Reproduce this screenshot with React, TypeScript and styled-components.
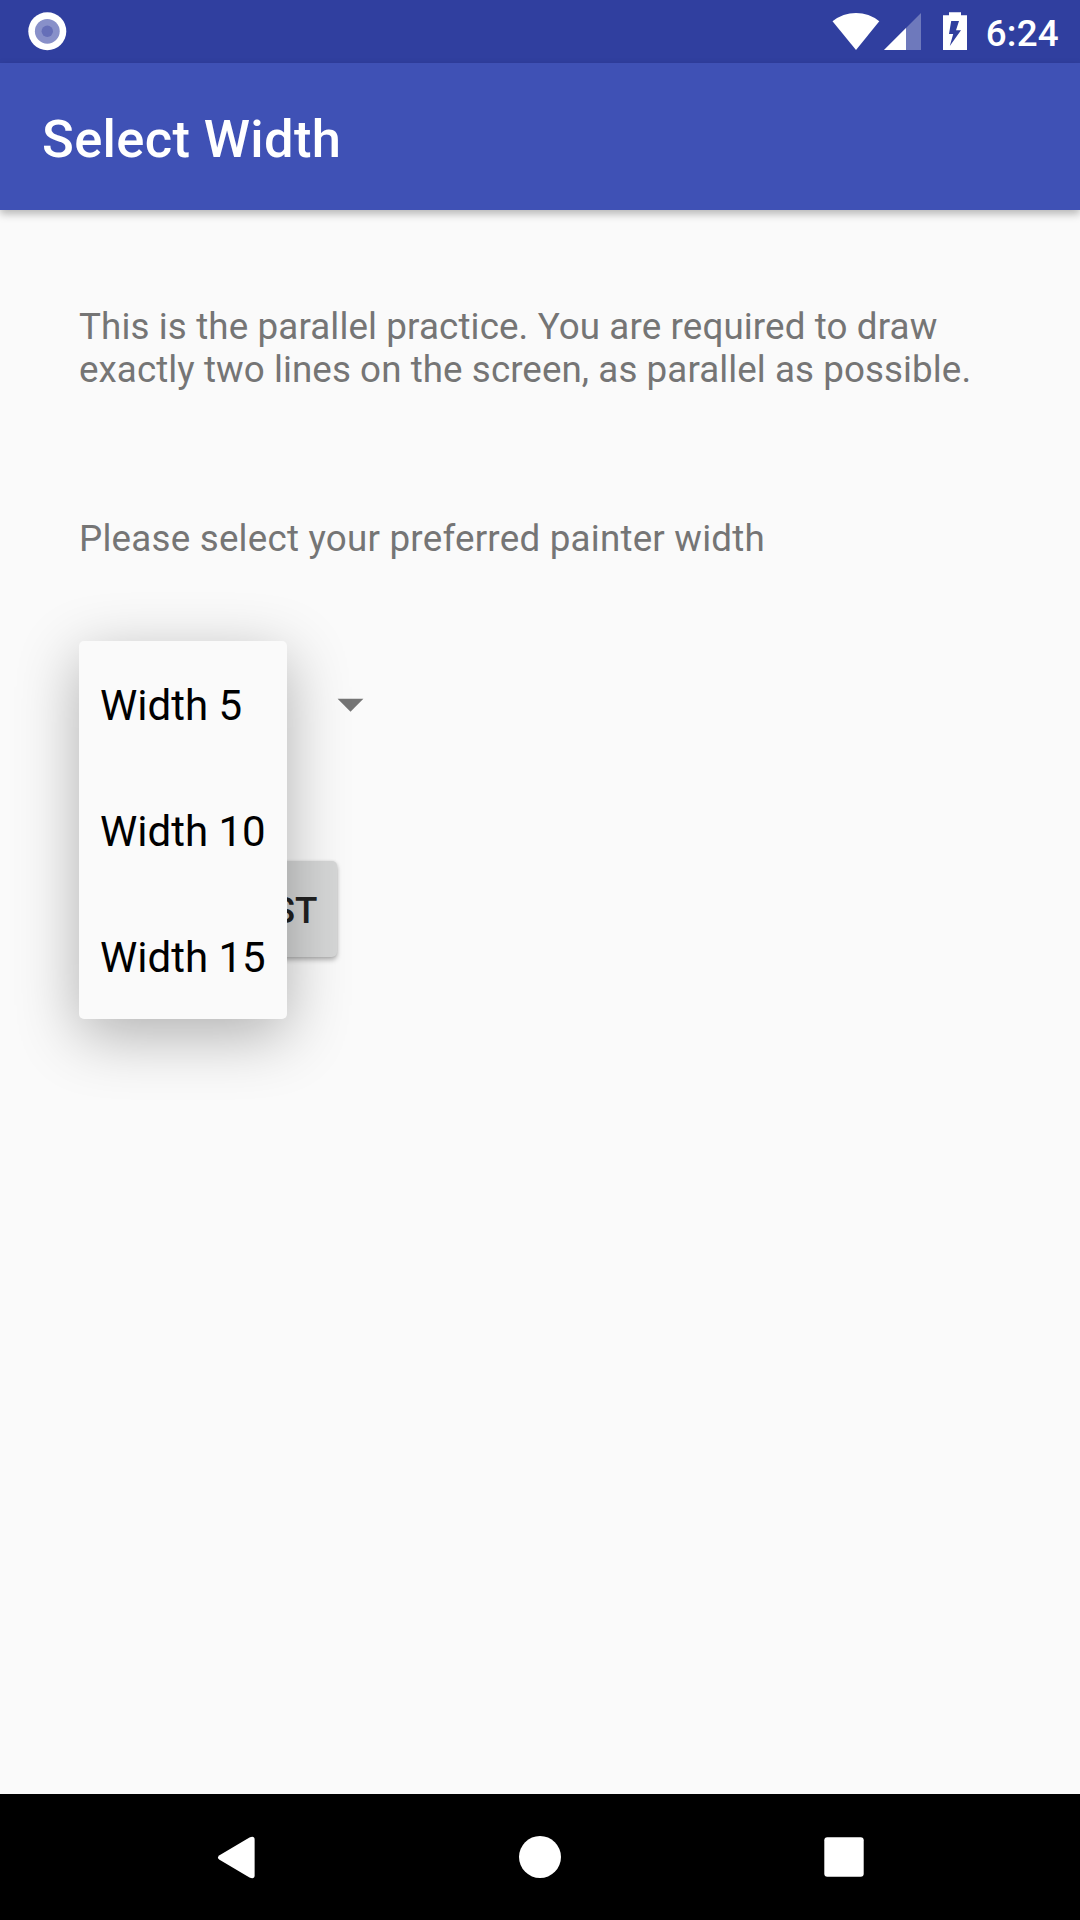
import React from "react";
import styled, { createGlobalStyle } from "styled-components";

const GlobalStyle = createGlobalStyle`
  * { box-sizing: border-box; }
  body { margin: 0; background: #fafafa; font-family: Roboto, "Noto Sans", sans-serif; }
`;

const Screen = styled.div`
  width: 1080px;
  height: 1920px;
  display: flex;
  flex-direction: column;
  background: #fafafa;
  overflow: hidden;
`;

const StatusBar = styled.header`
  height: 63px;
  flex: none;
  display: flex;
  justify-content: space-between;
  padding: 0 21px 0 28px;
  background: #303f9f;
  color: #fff;
`;

const StatusIcons = styled.div`
  display: flex;
`;

const Clock = styled.span`
  margin-left: 16px;
  padding-top: 2px;
  font-size: 36.75px;
  font-weight: 500;
  line-height: 63px;
  letter-spacing: 0.25px;
`;

const AppBar = styled.div`
  height: 147px;
  flex: none;
  display: flex;
  align-items: center;
  padding: 4px 42px 0;
  background: #3f51b5;
  box-shadow: 0 4px 8px rgba(0, 0, 0, 0.27);
  z-index: 1;
`;

const Title = styled.h1`
  margin: 0;
  color: #fff;
  font-size: 52.5px;
  font-weight: 500;
  line-height: 62px;
  letter-spacing: 0.35px;
`;

const Content = styled.main`
  flex: 1;
  display: flex;
  flex-direction: column;
  align-items: flex-start;
  padding: 95px 79px 0;
`;

const Message = styled.p<{ $gap: number }>`
  margin: 0 0 ${(p) => p.$gap}px;
  color: #757575;
  font-size: 36.75px;
  line-height: 43px;
`;

const Line = styled.span<{ $tracking: number }>`
  display: block;
  white-space: nowrap;
  letter-spacing: ${(p) => p.$tracking}px;
`;

const Spinner = styled.div`
  position: relative;
  width: 304px;
  height: 126px;
  display: flex;
  align-items: center;
  justify-content: flex-end;
  padding: 1px 19px 0 0;
  margin-bottom: 94px;
`;

const Menu = styled.ul`
  position: absolute;
  top: 0;
  left: 0;
  z-index: 2;
  width: 208px;
  margin: 0;
  padding: 0;
  list-style: none;
  background: #fafafa;
  border-radius: 5px;
  box-shadow: 0 16px 62px rgba(0, 0, 0, 0.3);
`;

const MenuItem = styled.li`
  height: 126px;
  padding: 2px 21px 0 21px;
  color: #000;
  font-size: 42px;
  line-height: 126px;
  white-space: nowrap;
`;

const StartButton = styled.button`
  width: 248px;
  height: 96px;
  margin-left: 10px;
  padding: 2px 19.5px 0 0;
  border: 0;
  border-radius: 5px;
  background: #d6d7d7;
  color: #212121;
  font-family: inherit;
  font-size: 36.75px;
  font-weight: 500;
  text-align: right;
  white-space: nowrap;
  box-shadow: 0 3px 5px rgba(0, 0, 0, 0.28), 0 0 3px rgba(0, 0, 0, 0.1);
`;

const NavBar = styled.nav`
  height: 126px;
  flex: none;
  display: flex;
  justify-content: center;
  background: #000;
`;

const NavKey = styled.div`
  width: 304px;
  display: flex;
  justify-content: center;
`;

const widths = [5, 10, 15];

export default function App() {
  return (
    <Screen>
      <GlobalStyle />
      <StatusBar>
        <svg width="40" height="63" viewBox="0 0 40 63">
          <circle cx="19.3" cy="31.3" r="19" fill="#fff" />
          <circle cx="19.3" cy="31.3" r="12.4" fill="#8890c9" />
          <circle cx="19.3" cy="31.3" r="5.7" fill="#666fb8" />
        </svg>
        <StatusIcons>
          <svg width="140" height="63" viewBox="830 0 140 63" fill="#fff">
            <path d="M832.5 21.2Q843 13 856 13Q869 13 879.3 21.2L856 50Z" />
            <path d="M921 13V50H884Z" opacity=".3" />
            <path d="M906 28V50H884Z" />
            <path
              fillRule="evenodd"
              d="M949 12.3H961V15.3H967V50H943V15.3H949ZM951.2 21L949 34H953.2L949.8 46L961 30.3H956L959 21Z"
            />
          </svg>
          <Clock>6:24</Clock>
        </StatusIcons>
      </StatusBar>
      <AppBar>
        <Title>Select Width</Title>
      </AppBar>
      <Content>
        <Message $gap={126}>
          <Line $tracking={0.12}>This is the parallel practice. You are required to draw</Line>
          <Line $tracking={0.07}>exactly two lines on the screen, as parallel as possible.</Line>
        </Message>
        <Message $gap={81}>
          <Line $tracking={0.22}>Please select your preferred painter width</Line>
        </Message>
        <Spinner>
          <svg width="27" height="14" viewBox="0 0 27 14">
            <path d="M0.6 0.7H26.4L13.5 13.8Z" fill="#757575" />
          </svg>
          <Menu>
            {widths.map((w) => (
              <MenuItem key={w}>Width {w}</MenuItem>
            ))}
          </Menu>
        </Spinner>
        <StartButton>START TEST</StartButton>
      </Content>
      <NavBar>
        <NavKey>
          <svg width="40" height="126" viewBox="216 0 40 126">
            <path
              d="M219.5 61.2L249.5 43.4Q254.6 41.5 254.6 45.5V81.5Q254.6 85.5 249.5 83.6L219.5 65.8Q216.3 63.5 219.5 61.2Z"
              fill="#fff"
            />
          </svg>
        </NavKey>
        <NavKey>
          <svg width="42" height="126" viewBox="0 0 42 126">
            <circle cx="21" cy="63" r="21" fill="#fff" />
          </svg>
        </NavKey>
        <NavKey>
          <svg width="40" height="126" viewBox="0 0 40 126">
            <rect x="0.3" y="43.3" width="39.4" height="39.4" rx="3" fill="#fff" />
          </svg>
        </NavKey>
      </NavBar>
    </Screen>
  );
}
